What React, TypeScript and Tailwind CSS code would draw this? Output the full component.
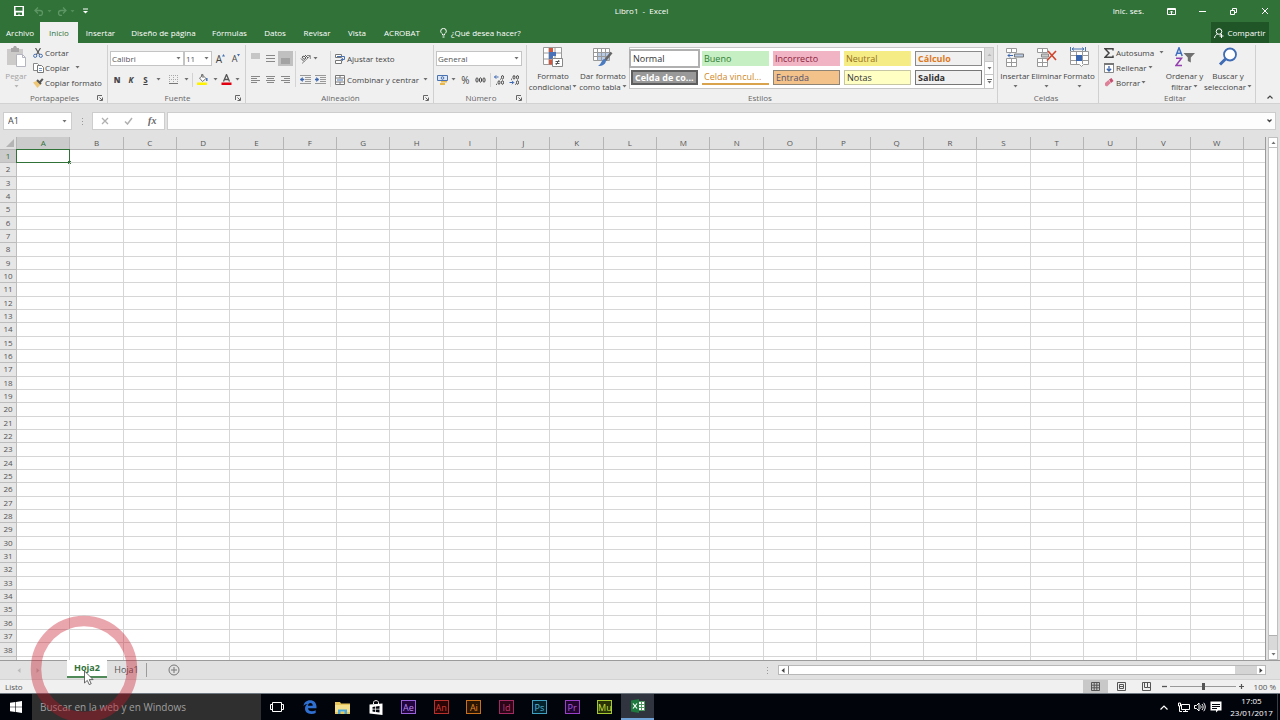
import React, { useState } from 'react';
import clsx from 'clsx';

const COLUMNS = 'ABCDEFGHIJKLMNOPQRSTUVW'.split('');
const ROWS = Array.from({ length: 38 }, (_, i) => i + 1);

const TABS = [
  { name: 'Archivo', width: 'w-10' },
  { name: 'Inicio', width: 'w-[38px]' },
  { name: 'Insertar', width: 'w-[45px]' },
  { name: 'Diseño de página', width: 'w-[81px]' },
  { name: 'Fórmulas', width: 'w-[51px]' },
  { name: 'Datos', width: 'w-10' },
  { name: 'Revisar', width: 'w-[44px]' },
  { name: 'Vista', width: 'w-9' },
  { name: 'ACROBAT', width: 'w-[54px]' },
];

const CELL_STYLES = [
  { name: 'Normal', look: 'bg-white text-[#333] outline-2 outline-[#b0b0b0]' },
  { name: 'Bueno', look: 'bg-[#c6efc4] text-[#2f7d32]' },
  { name: 'Incorrecto', look: 'bg-[#f0b4c4] text-[#8c1f3c]' },
  { name: 'Neutral', look: 'bg-[#f6ec86] text-[#94701c]' },
  { name: 'Cálculo', look: 'border border-[#8a8a8a] bg-[#f0f0f0] font-bold text-[#dd7a1e]' },
  { name: 'Celda de co...', look: 'border-2 border-[#5e5e5e] bg-[#999] font-bold text-white' },
  { name: 'Celda vincul...', look: 'border-b-2 border-[#d9a24c] bg-white text-[#d08a2a]' },
  { name: 'Entrada', look: 'border border-[#8f8577] bg-[#f2c28a] text-[#55526e]' },
  { name: 'Notas', look: 'border border-[#c6c6a4] bg-[#ffffc4] text-[#333]' },
  { name: 'Salida', look: 'border border-[#777] bg-[#f0f0f0] font-bold text-[#333]' },
];

const ADOBE_APPS = [
  { name: 'Ae', look: 'border-[#9a62d8] bg-[#22053f] text-[#b98af0]' },
  { name: 'An', look: 'border-[#b8302c] bg-[#2b0505] text-[#d13a33]' },
  { name: 'Ai', look: 'border-[#c8701c] bg-[#2a1503] text-[#e58a26]' },
  { name: 'Id', look: 'border-[#a32a60] bg-[#2b0518] text-[#c23a74]' },
  { name: 'Ps', look: 'border-[#3f9fc0] bg-[#04212e] text-[#55b8da]' },
  { name: 'Pr', look: 'border-[#9a3fc8] bg-[#22052f] text-[#b45ae0]' },
  { name: 'Mu', look: 'border-[#a8c832] bg-[#2a3305] text-[#c4e03c]' },
];

interface IconProps {
  w: number;
  h: number;
  className?: string;
  children: React.ReactNode;
}

const Icon: React.FC<IconProps> = ({ w, h, className, children }) => (
  <svg width={w} height={h} viewBox={`0 0 ${w} ${h}`} fill="none" stroke="currentColor" className={clsx('shrink-0', className)} aria-hidden="true">
    {children}
  </svg>
);

const Caret: React.FC<{ className?: string }> = ({ className }) => (
  <Icon w={5} h={3} className={clsx('inline-block opacity-75', className)}>
    <path d="M0.5 0h4L2.5 2.5z" fill="currentColor" stroke="none" />
  </Icon>
);

const Lines: React.FC<{ rows: [number, number, number][] }> = ({ rows }) => (
  <Icon w={11} h={9} className="text-[#888]">
    {rows.map(([x1, x2, y]) => (
      <path key={y} d={`M${x1} ${y}.5H${x2}`} />
    ))}
  </Icon>
);

interface ToolProps {
  label: string;
  width: string;
  className?: string;
  children: React.ReactNode;
}

const Tool: React.FC<ToolProps> = ({ label, width, className, children }) => (
  <button aria-label={label} title={label} className={clsx('flex h-[15px] shrink-0 items-center justify-center', width, className)}>
    {children}
  </button>
);

const Divider = () => <span className="h-[14px] w-px shrink-0 bg-[#d2d2d2]" />;

interface GroupProps {
  title: string;
  width: string;
  launcher?: boolean;
  children: React.ReactNode;
}

const Group: React.FC<GroupProps> = ({ title, width, launcher, children }) => (
  <section className={clsx('flex shrink-0 flex-col pt-[2px]', width)}>
    <div className="flex flex-1 flex-col border-r border-[#d0d0d0]">
      <div className="h-12">{children}</div>
      <div className="flex h-[10px] items-center pr-1 text-[#666]">
        <h2 className={clsx('flex-1 text-center leading-[10px]', launcher && 'pl-3')}>{title}</h2>
        {launcher && (
          <button aria-label={`Más opciones de ${title}`}>
            <Icon w={6} h={6}>
              <path d="M0.5 5V0.5H5M2.5 2.5L5 5M5.5 2.5v3h-3" />
            </Icon>
          </button>
        )}
      </div>
    </div>
  </section>
);

interface ComboProps {
  label: string;
  value: string;
  width: string;
}

const Combo: React.FC<ComboProps> = ({ label, value, width }) => (
  <div className={clsx('relative flex h-[15px] shrink-0 items-center border border-[#c4c4c4] bg-white', width)}>
    <select aria-label={label} className="w-full appearance-none bg-transparent pl-px leading-3 text-[#555] outline-none">
      <option>{value}</option>
    </select>
    <Caret className="pointer-events-none absolute right-[2px]" />
  </div>
);

interface BigButtonProps {
  lines: string[];
  width: string;
  icon: React.ReactNode;
  className?: string;
}

const BigButton: React.FC<BigButtonProps> = ({ lines, width, icon, className }) => (
  <button className={clsx('flex shrink-0 flex-col items-center whitespace-nowrap leading-[10px]', width, className)}>
    <span className="flex h-6 items-center">{icon}</span>
    <span className="mt-[2px]">{lines[0]}</span>
    <span className="flex h-[11px] items-center gap-px">
      {lines[1]}
      <Caret />
    </span>
  </button>
);

const ListButton: React.FC<{ icon: React.ReactNode; text: string; caret?: string }> = ({ icon, text, caret }) => (
  <button className="flex h-[15px] items-center whitespace-nowrap">
    <span className="flex w-3 shrink-0 justify-center">{icon}</span>
    <span className="pl-px">{text}</span>
    {caret && <Caret className={caret} />}
  </button>
);

const TitleBar = () => (
  <div className="flex h-[22px] items-center pr-[11px] pl-[14px] text-white">
    <div className="flex flex-1 items-center">
      <button aria-label="Guardar">
        <Icon w={10} h={10}>
          <path d="M0 0h10v10H0z" fill="currentColor" stroke="none" />
          <path d="M1.500 1h7v3.800h-7zM2 6.500h6V9H5.500V7.800h-1V9H2z" fill="#317239" stroke="none" />
        </Icon>
      </button>
      <button aria-label="Deshacer" className="ml-[10px] flex items-center gap-[3px] text-[#5d9763]">
        <Icon w={10} h={9}>
          <path d="M4 0.5L1 3.5l3 3M1 3.5h5a2.5 2.5 0 0 1 0 5H5" strokeWidth="1.3" />
        </Icon>
        <Caret />
      </button>
      <button aria-label="Rehacer" className="ml-[5px] flex items-center gap-[3px] text-[#5d9763]">
        <Icon w={10} h={9}>
          <path d="M6 0.5l3 3-3 3M9 3.5H4a2.5 2.5 0 0 0 0 5h1" strokeWidth="1.3" />
        </Icon>
        <Caret />
      </button>
      <button aria-label="Personalizar barra de acceso rápido" className="ml-2">
        <Icon w={5} h={6}>
          <path d="M0 1h5" />
          <path d="M0 3h5L2.5 5.5z" fill="currentColor" stroke="none" />
        </Icon>
      </button>
    </div>
    <h1>Libro1 &nbsp;-&nbsp; Excel</h1>
    <div className="flex flex-1 items-center justify-end">
      <button className="mr-[23px]">Inic. ses.</button>
      <button aria-label="Opciones de presentación de la cinta" className="mr-[23px]">
        <Icon w={9} h={7}>
          <path d="M0.5 0.5h8v6h-8zM0.5 1.5h8M4.5 6V3M3 4.5L4.5 3 6 4.5" />
        </Icon>
      </button>
      <button aria-label="Minimizar" className="mr-6">
        <Icon w={7} h={7}>
          <path d="M0 3.5h7" />
        </Icon>
      </button>
      <button aria-label="Restaurar" className="mr-6">
        <Icon w={7} h={7}>
          <path d="M0.5 2.5h4v4h-4zM2.5 2V0.5h4v4H5" />
        </Icon>
      </button>
      <button aria-label="Cerrar">
        <Icon w={8} h={8}>
          <path d="M1 1l6 6M7 1L1 7" />
        </Icon>
      </button>
    </div>
  </div>
);

const TabBar: React.FC<{ active: string; onSelect: (name: string) => void }> = ({ active, onSelect }) => (
  <nav className="flex h-[21px] items-stretch font-medium text-white">
    {TABS.map((tab) => (
      <button
        key={tab.name}
        onClick={() => onSelect(tab.name)}
        className={clsx('shrink-0 whitespace-nowrap', tab.width, active === tab.name && 'bg-[#f0f0f0] text-[#317239]')}
      >
        {tab.name}
      </button>
    ))}
    <button className="flex items-center gap-1 pl-[11px] font-normal whitespace-nowrap">
      <Icon w={7} h={10}>
        <path d="M2.5 7V6C1.5 5.2 0.7 4.3 0.7 3.2a2.8 2.8 0 0 1 5.6 0C6.3 4.3 5.5 5.2 4.5 6v1zM2.5 9h2" />
      </Icon>
      ¿Qué desea hacer?
    </button>
    <button className="mr-[11px] ml-auto flex w-[58px] items-center justify-center gap-[3px] bg-[#1f5527]">
      <Icon w={10} h={10}>
        <circle cx="5" cy="3.5" r="2.8" />
        <path d="M0.5 10C0.8 7.8 2 6.6 3.6 6.1M6.3 6.2l1 .8M7.5 6v4M5.5 8h4" />
      </Icon>
      Compartir
    </button>
  </nav>
);

const ClipboardGroup = () => (
  <Group title="Portapapeles" width="w-[108px]" launcher>
    <div className="flex">
      <BigButton
        lines={['Pegar', '']}
        width="w-8"
        className="text-[#a3a3a3]"
        icon={
          <Icon w={19} h={22}>
            <path d="M0 3h16v16H0z" fill="#cdcaca" stroke="none" />
            <path d="M4 2h2l1-2h2l1 2h2v4H4z" fill="#a9a7a7" stroke="none" />
            <path d="M9.500 8.500h6l3 3v9h-9z" fill="#fff" stroke="#b5b5c0" />
            <path d="M15.500 8.500v3h3" stroke="#b5b5c0" />
          </Icon>
        }
      />
      <div className="flex flex-col">
        <ListButton
          text="Cortar"
          icon={
            <Icon w={10} h={10}>
              <path d="M2.500 0L6.800 7M7.500 0L3.200 7" stroke="#555" strokeWidth="1.200" />
              <circle cx="2.200" cy="7.800" r="1.600" stroke="#4a72b0" />
              <circle cx="7.800" cy="7.800" r="1.600" stroke="#4a72b0" />
            </Icon>
          }
        />
        <ListButton
          text="Copiar"
          caret="ml-[6px]"
          icon={
            <Icon w={11} h={10}>
              <path d="M0.500 0.500h4l1 1v6h-5z" fill="#fff" stroke="#888" />
              <path d="M4.500 2.500h4l2 2v5h-6z" fill="#fff" stroke="#777" />
              <path d="M6 5.500h3M6 7.500h3" stroke="#7a98c4" />
            </Icon>
          }
        />
        <ListButton
          text="Copiar formato"
          icon={
            <Icon w={11} h={10}>
              <path d="M0 4.500L4.500 2.500 8 6 4.500 10z" fill="#eec877" stroke="none" />
              <path d="M4 2l4 4M7 4L9.800 0.800" stroke="#555" strokeWidth="2" />
            </Icon>
          }
        />
      </div>
    </div>
  </Group>
);

const FontGroup = () => (
  <Group title="Fuente" width="w-[138px]" launcher>
    <div className="flex flex-col gap-[6px] pt-[6px] pl-[2px]">
      <div className="flex items-center">
        <Combo label="Fuente" value="Calibri" width="w-[74px]" />
        <Combo label="Tamaño de fuente" value="11" width="w-[28px]" />
        <Tool label="Aumentar tamaño de fuente" width="w-[17px]">
          <span className="text-[10px] font-medium">A</span>
          <Icon w={3} h={9} className="text-[#4a72b0]">
            <path d="M0 2.500L1.500 0 3 2.500z" fill="currentColor" stroke="none" />
          </Icon>
        </Tool>
        <Tool label="Disminuir tamaño de fuente" width="w-[14px]">
          <span className="text-[9px] font-medium">A</span>
          <Icon w={3} h={9} className="text-[#4a72b0]">
            <path d="M0 0h3L1.500 2.500z" fill="currentColor" stroke="none" />
          </Icon>
        </Tool>
      </div>
      <div className="flex items-center">
        <Tool label="Negrita" width="w-[14px]" className="font-extrabold">N</Tool>
        <Tool label="Cursiva" width="w-[14px]" className="font-bold italic">K</Tool>
        <Tool label="Subrayado" width="w-[15px]" className="font-bold underline">S</Tool>
        <Tool label="Opciones de subrayado" width="w-[11px]"><Caret /></Tool>
        <Tool label="Bordes" width="w-[19px]">
          <Icon w={9} h={9} className="text-[#aaa]">
            <path d="M0.500 0v9M4.500 0v9M8.500 0v9M0 0.500h9M0 4.500h9" strokeDasharray="1 1" />
            <path d="M0 8.500h9" stroke="#777" />
          </Icon>
        </Tool>
        <Tool label="Opciones de bordes" width="w-[7px]"><Caret /></Tool>
        <span className="w-[2px]" />
        <Divider />
        <Tool label="Color de relleno" width="w-[19px]">
          <Icon w={11} h={11}>
            <path d="M2.500 4l3.500-2.500 3 3L5.500 7.500z" fill="#fff" stroke="#777" />
            <path d="M4.500 3V0.500h1.500V4" stroke="#777" />
            <path d="M9.800 4v3" stroke="#4a72b0" strokeWidth="1.500" />
            <path d="M0 8.500h10v2.500H0z" fill="#fff200" stroke="none" />
          </Icon>
        </Tool>
        <Tool label="Opciones de relleno" width="w-[7px]"><Caret /></Tool>
        <Tool label="Color de fuente" width="w-[15px]">
          <Icon w={11} h={11}>
            <path d="M2.500 7.500l3-7 3 7M3.500 5.500h4" stroke="#555" strokeWidth="1.300" />
            <path d="M0.500 8.500h10v2.500h-10z" fill="#e00010" stroke="none" />
          </Icon>
        </Tool>
        <Tool label="Opciones de color de fuente" width="w-[7px]"><Caret /></Tool>
      </div>
    </div>
  </Group>
);

const AlignmentGroup = () => (
  <Group title="Alineación" width="w-[188px]" launcher>
    <div className="flex pt-[6px] pl-[2px]">
      <div className="grid shrink-0 grid-cols-3 gap-y-[6px]">
        <Tool label="Alinear arriba" width="w-[15px]">
          <Icon w={11} h={11}><path d="M1 0h9v6H1z" fill="#c6c6c6" stroke="none" /></Icon>
        </Tool>
        <Tool label="Alinear en el medio" width="w-[15px]"><Lines rows={[[1, 10, 1], [1, 10, 4], [1, 10, 7]]} /></Tool>
        <Tool label="Alinear abajo" width="w-[15px]" className="bg-[#c0c0c0]">
          <Icon w={11} h={11}><path d="M1 5h9v6H1z" fill="#a2a2a2" stroke="none" /></Icon>
        </Tool>
        <Tool label="Alinear a la izquierda" width="w-[15px]"><Lines rows={[[1, 10, 1], [1, 7, 3], [1, 10, 5], [1, 7, 7]]} /></Tool>
        <Tool label="Centrar" width="w-[15px]"><Lines rows={[[1, 10, 1], [2, 9, 3], [1, 10, 5], [2, 9, 7]]} /></Tool>
        <Tool label="Alinear a la derecha" width="w-[15px]"><Lines rows={[[1, 10, 1], [4, 10, 3], [1, 10, 5], [4, 10, 7]]} /></Tool>
      </div>
      <div className="ml-[2px] flex w-9 shrink-0 flex-col gap-[6px] border-x border-[#d4d4d4] pl-[2px]">
        <div className="flex">
          <Tool label="Orientación" width="w-[14px]">
            <Icon w={11} h={10}>
              <path d="M2 9.500L10 2M7 1.500h3.300V5" stroke="#888" />
              <path d="M1 4.500l3 3M2 3l2-1 2 2-2 1.500zM5 1l3 3" stroke="#555" />
            </Icon>
          </Tool>
          <Tool label="Opciones de orientación" width="w-[7px]"><Caret /></Tool>
        </div>
        <div className="flex">
          <Tool label="Disminuir sangría" width="w-[15px]">
            <Icon w={11} h={9} className="text-[#999]">
              <path d="M0 0.500h11M5 2.500h6M5 4.500h6M5 6.500h6M0 8.500h11" />
              <path d="M0 4.500L2.500 2.500v1.500H4v1H2.500v1.500z" fill="#3a66b0" stroke="#3a66b0" strokeWidth="0.500" />
            </Icon>
          </Tool>
          <Tool label="Aumentar sangría" width="w-[15px]">
            <Icon w={11} h={9} className="text-[#999]">
              <path d="M0 0.500h11M5 2.500h6M5 4.500h6M5 6.500h6M0 8.500h11" />
              <path d="M4 4.500L1.500 2.500v1.500H0v1h1.500v1.500z" fill="#3a66b0" stroke="#3a66b0" strokeWidth="0.500" />
            </Icon>
          </Tool>
        </div>
      </div>
      <div className="flex flex-col gap-[6px] pl-[3px]">
        <ListButton
          text="Ajustar texto"
          icon={
            <Icon w={11} h={10}>
              <path d="M0.500 0.500h6v3h-6zM0.500 6.500h6v3h-6z" fill="#fff" stroke="#777" />
              <path d="M2 2.500h7.500v3H8" stroke="#4a72b0" />
              <path d="M5.500 5.500L8 3.800v3.400z" fill="#4a72b0" stroke="none" />
            </Icon>
          }
        />
        <ListButton
          text="Combinar y centrar"
          caret="ml-1"
          icon={
            <Icon w={10} h={10}>
              <path d="M0.500 0.500h9v9h-9zM0 3h10M0 7h10M5 0v3M5 7v3" fill="#fff" stroke="#777" />
              <path d="M2 5h6" stroke="#4a72b0" />
            </Icon>
          }
        />
      </div>
    </div>
  </Group>
);

const NumberGroup = () => (
  <Group title="Número" width="w-[93px]" launcher>
    <div className="flex flex-col gap-[6px] pt-[6px] pl-[2px]">
      <Combo label="Formato de número" value="General" width="w-[86px]" />
      <div className="flex items-center">
        <Tool label="Formato de contabilidad" width="w-[13px]">
          <Icon w={11} h={10}>
            <path d="M0.500 0.500h10v5h-10z" fill="#dde6f4" stroke="#4a72b0" />
            <circle cx="5.500" cy="3" r="1.300" stroke="#4a72b0" />
            <path d="M4 6h6v1.500H4zM3 8h5v2H3z" fill="#e8b848" stroke="none" />
          </Icon>
        </Tool>
        <Tool label="Opciones de contabilidad" width="w-[9px]"><Caret /></Tool>
        <Tool label="Estilo porcentual" width="w-[15px]" className="text-[10px]">%</Tool>
        <Tool label="Estilo millares" width="w-[15px]">
          <Icon w={11} h={6}>
            <ellipse cx="2" cy="3" rx="1.100" ry="2.200" />
            <ellipse cx="5.500" cy="3" rx="1.100" ry="2.200" />
            <ellipse cx="9" cy="3" rx="1.100" ry="2.200" />
          </Icon>
        </Tool>
        <span className="w-[2px]" />
        <Divider />
        <Tool label="Aumentar decimales" width="w-[16px]">
          <Icon w={11} h={10}>
            <path d="M4.500 2H0.500M2.200 0.300L0.500 2l1.700 1.700" stroke="#3a66b0" />
            <ellipse cx="8.500" cy="2.300" rx="1" ry="1.800" />
            <ellipse cx="5" cy="7.500" rx="1" ry="1.800" />
            <ellipse cx="8.500" cy="7.500" rx="1" ry="1.800" />
            <path d="M2 9.300h1M6 4.200h.8" />
          </Icon>
        </Tool>
        <Tool label="Disminuir decimales" width="w-[14px]">
          <Icon w={11} h={10}>
            <ellipse cx="5" cy="2.300" rx="1" ry="1.800" />
            <ellipse cx="8.500" cy="2.300" rx="1" ry="1.800" />
            <ellipse cx="8.500" cy="7.500" rx="1" ry="1.800" />
            <path d="M2 4.200h1M6 9.300h.8" />
            <path d="M0.500 7.500h4M3 5.800l1.700 1.700L3 9.200" stroke="#3a66b0" />
          </Icon>
        </Tool>
      </div>
    </div>
  </Group>
);

const StylesGroup = () => (
  <Group title="Estilos" width="w-[471px]">
    <div className="flex pl-px">
      <BigButton
        lines={['Formato', 'condicional']}
        width="w-[50px]"
        icon={
          <Icon w={20} h={20}>
            <path d="M0.500 0.500h18v17h-18zM0 6h18M0 12h18M6 0v17M12 0v17" fill="#fff" stroke="#9a9a9a" />
            <path d="M6 1h4v4H6zM6 12.500h5v5H6z" fill="#d0563f" stroke="none" />
            <path d="M6 5h7v4H6zM6 9h4v3H6z" fill="#4a72b8" stroke="none" />
            <path d="M9.500 11.500h10v8h-10z" fill="#fff" stroke="#888" />
            <path d="M12.500 14.500h4M12.500 16.500h4M16 13l-3 5" stroke="#555" />
          </Icon>
        }
      />
      <BigButton
        lines={['Dar formato', 'como tabla']}
        width="w-[50px]"
        icon={
          <Icon w={20} h={20}>
            <path d="M0.500 1.500h16v12h-16z" fill="#fff" stroke="#999" />
            <path d="M4 5h12v8H4z" fill="#b7cbe6" stroke="none" />
            <path d="M0 5.500h16M0 9.500h16M4.500 1v12M8.500 1v12M12.500 1v12" stroke="#999" />
            <path d="M18.500 5.500L12 13.500" stroke="#666" strokeWidth="2.500" />
            <path d="M13 13c0 4-3 6-8 6 3-1.500 3-5 6-7z" fill="#4a7ac0" stroke="none" />
          </Icon>
        }
      />
      <div className="mt-[2px] ml-px flex self-start border border-[#c6c6c6] bg-white">
        <div className="grid grid-cols-5 gap-1 py-[3px] pr-[2px] pl-px">
          {CELL_STYLES.map((style) => (
            <button key={style.name} className={clsx('h-[15px] w-[67px] px-[2px] text-left text-[9px] leading-[11px] whitespace-nowrap', style.look)}>
              {style.name}
            </button>
          ))}
        </div>
        <div className="flex w-[9px] flex-col divide-y divide-[#c6c6c6] border-l border-[#c6c6c6]">
          <button aria-label="Estilos anteriores" className="flex flex-1 items-center justify-center bg-[#dcdcdc] text-[#aaa]"><Caret className="rotate-180" /></button>
          <button aria-label="Estilos siguientes" className="flex flex-1 items-center justify-center"><Caret /></button>
          <button aria-label="Más estilos" className="flex flex-1 flex-col items-center justify-center gap-px">
            <span className="h-px w-[5px] bg-[#666]" />
            <Caret />
          </button>
        </div>
      </div>
    </div>
  </Group>
);

const CellsGroup = () => (
  <Group title="Celdas" width="w-[101px]">
    <div className="flex pl-px">
      <BigButton
        lines={['Insertar', '']}
        width="w-[32px]"
        icon={
          <Icon w={18} h={19} className="text-[#999]">
            <path d="M0.500 0.500h10v4h-10zM5.500 0.500v4M0.500 10.500h10v8h-10zM5.500 10.500v8M0.500 14.500h10" fill="#fff" />
            <path d="M8.500 6h9v3h-9z" fill="#b7cbe6" stroke="#777" />
            <path d="M7 7.500H2M4 5.500l-2 2 2 2" stroke="#3a66b0" />
          </Icon>
        }
      />
      <BigButton
        lines={['Eliminar', '']}
        width="w-[31px]"
        icon={
          <Icon w={20} h={19} className="text-[#999]">
            <path d="M0.500 0.500h10v4h-10zM5.500 0.500v4M0.500 10.500h10v8h-10zM5.500 10.500v8M0.500 14.500h10" fill="#fff" />
            <path d="M4.500 6h7v3h-7z" fill="#c9c9c9" stroke="#888" />
            <path d="M11 3l8 9M19 3l-9 9.500" stroke="#d0452c" strokeWidth="1.600" />
          </Icon>
        }
      />
      <BigButton
        lines={['Formato', '']}
        width="w-[34px]"
        icon={
          <Icon w={19} h={20}>
            <path d="M0.500 4.500h18v13h-5l-2 2-2-2h-9zM0 8.500h18M0 13.500h18M6.500 4v13M12.500 4v13" fill="#fff" stroke="#999" />
            <path d="M6 8h6v6H6z" fill="#3a66b0" stroke="none" />
            <path d="M0.500 0v4M15.500 0v4M2 2h12M4 0.500L2 2l2 1.500M12 0.500L14 2l-2 1.500" stroke="#4a72b0" />
          </Icon>
        }
      />
    </div>
  </Group>
);

const EditingGroup = () => (
  <Group title="Editar" width="w-[157px]">
    <div className="flex pl-1">
      <div className="flex w-[61px] shrink-0 flex-col">
        <ListButton
          text="Autosuma"
          caret="ml-[5px]"
          icon={
            <Icon w={10} h={10}>
              <path d="M9 2.500V0.800H1L5 5 1 9.200h8V7.500" stroke="#444" strokeWidth="1.500" />
            </Icon>
          }
        />
        <ListButton
          text="Rellenar"
          caret="ml-px"
          icon={
            <Icon w={10} h={10}>
              <path d="M0.500 0.500h9v9h-9z" fill="#fff" stroke="#888" />
              <path d="M0 1h10" stroke="#777" strokeWidth="2" />
              <path d="M5 3v5M2.800 5.800L5 8l2.200-2.200" stroke="#3a66b0" strokeWidth="1.300" />
            </Icon>
          }
        />
        <ListButton
          text="Borrar"
          caret="ml-px"
          icon={
            <Icon w={10} h={9}>
              <path d="M5 1.500L7.500 0 9.500 3 7 5z" fill="#c74e6e" stroke="none" />
              <path d="M4.500 2L6.800 5 3 8.500 1 7.500 1 5z" fill="#dd8098" stroke="none" />
            </Icon>
          }
        />
      </div>
      <BigButton
        lines={['Ordenar y', 'filtrar']}
        width="w-[41px]"
        icon={
          <Icon w={20} h={20}>
            <path d="M0.800 9L4 0.800 7.200 9M2 6.200h4" stroke="#3f6fc0" strokeWidth="1.500" />
            <path d="M1 11.300h5.500L1 18.500h6" stroke="#9440b0" strokeWidth="1.500" />
            <path d="M8.500 6h11.500l-4.200 4.500v5l-3-1.500v-3.500z" fill="#707070" stroke="none" />
          </Icon>
        }
      />
      <BigButton
        lines={['Buscar y', 'seleccionar']}
        width="w-[46px]"
        icon={
          <Icon w={20} h={20}>
            <circle cx="12" cy="7.500" r="6" fill="#fff" stroke="#3f6cb4" strokeWidth="1.800" />
            <path d="M7.500 12L2 17.500" stroke="#3f6cb4" strokeWidth="3" />
          </Icon>
        }
      />
    </div>
  </Group>
);

const FormulaBar = () => (
  <div className="flex h-[18px] items-stretch pr-1 pl-[3px]">
    <div className="relative flex w-[69px] items-center border border-[#cdcdcd] bg-white">
      <input aria-label="Cuadro de nombres" defaultValue="A1" className="w-full bg-transparent pl-1 text-[9px] text-[#444] outline-none" />
      <Caret className="absolute right-1" />
    </div>
    <div className="flex w-5 flex-col items-center justify-center gap-[2px]">
      <span className="size-px bg-[#999]" />
      <span className="size-px bg-[#999]" />
      <span className="size-px bg-[#999]" />
    </div>
    <div className="flex w-[73px] items-center justify-around border border-[#cdcdcd] bg-white text-[#b0b0b0]">
      <button aria-label="Cancelar">
        <Icon w={8} h={8}><path d="M1 1l6 6M7 1L1 7" strokeWidth="1.300" /></Icon>
      </button>
      <button aria-label="Introducir">
        <Icon w={9} h={8}><path d="M1 4.500L3.500 7 8 1" strokeWidth="1.500" /></Icon>
      </button>
      <button aria-label="Insertar función" className="font-['Liberation_Serif',serif] text-[10px] font-bold italic text-[#666]">fx</button>
    </div>
    <div className="ml-[2px] flex flex-1 items-center border border-[#cdcdcd] bg-[#fdfdfd] pr-[3px]">
      <input aria-label="Barra de fórmulas" className="h-full flex-1 bg-transparent px-1 text-[9px] outline-none" />
      <button aria-label="Expandir barra de fórmulas">
        <Icon w={5} h={4}><path d="M0.500 0.500l2 2 2-2" strokeWidth="1.300" /></Icon>
      </button>
    </div>
  </div>
);

const Sheet = () => (
  <table className="h-full w-full table-fixed border-separate border-spacing-0 border-r border-[#9b9b9b] bg-white text-center leading-3 text-[#555]">
    <colgroup>
      <col className="w-[17px]" />
      {COLUMNS.map((col) => <col key={col} />)}
      <col className="w-[21px]" />
    </colgroup>
    <thead>
      <tr className="h-[13px] bg-[#e1e1e1]">
        <td className="border-r border-b border-[#b5b5b5] p-0">
          <Icon w={9} h={9} className="ml-[6px]"><path d="M8 0v8H0z" fill="#b4b4b4" stroke="none" /></Icon>
        </td>
        {COLUMNS.map((col) => (
          <th
            key={col}
            scope="col"
            className={clsx('border-r border-b p-0 font-normal', col === 'A' ? 'border-r-[#b5b5b5] border-b-[#317239] bg-[#cbcbcb] text-[#317239]' : 'border-[#b5b5b5]')}
          >
            {col}
          </th>
        ))}
        <td className="border-b border-[#b5b5b5] p-0" />
      </tr>
    </thead>
    <tbody>
      {ROWS.map((row) => (
        <tr key={row}>
          <th
            scope="row"
            className={clsx('border-r border-b border-[#bdbdbd] p-0 font-normal', row === 1 ? 'bg-[#cbcbcb] text-[#317239]' : 'bg-[#e6e6e6]')}
          >
            {row}
          </th>
          {COLUMNS.map((col) => (
            <td key={col} className="relative border-r border-b border-[#d6d6d6] p-0">
              {row === 1 && col === 'A' && (
                <span className="absolute -top-px -right-px -bottom-px -left-px border border-[#317239]">
                  <span className="absolute -right-[2px] -bottom-[2px] size-[3px] bg-[#317239]" />
                </span>
              )}
            </td>
          ))}
          <td className="border-b border-[#d6d6d6] p-0" />
        </tr>
      ))}
      <tr className="h-[3px]">
        <td className="h-[3px] border-r border-[#bdbdbd] bg-[#e6e6e6] p-0" />
        {COLUMNS.map((col) => <td key={col} className="h-[3px] border-r border-[#d6d6d6] p-0" />)}
        <td className="h-[3px] p-0" />
      </tr>
    </tbody>
  </table>
);

const VerticalScrollbar = () => (
  <div className="mr-[2px] ml-[2px] flex w-[10px] shrink-0 flex-col border border-[#c0c0c0] bg-[#d9d9d9]">
    <button aria-label="Desplazar hacia arriba" className="flex h-[10px] items-center justify-center border-b border-[#c0c0c0] bg-white"><Caret className="rotate-180" /></button>
    <div className="flex-1 border-b border-[#b0b0b0] bg-white" />
    <div className="h-[14px]" />
    <button aria-label="Desplazar hacia abajo" className="flex h-[9px] items-center justify-center bg-white"><Caret /></button>
  </div>
);

const SheetTabs = () => (
  <div className="flex h-[19px] items-center border-t border-[#9b9b9b] text-[9px]">
    <button aria-label="Hoja anterior" className="ml-[17px] text-[#bbb]">
      <Icon w={4} h={5}><path d="M3.500 0v5L0.500 2.500z" fill="currentColor" stroke="none" /></Icon>
    </button>
    <button aria-label="Hoja siguiente" className="ml-[15px] text-[#bbb]">
      <Icon w={4} h={5}><path d="M0.500 0v5L3.500 2.500z" fill="currentColor" stroke="none" /></Icon>
    </button>
    <button className="-mt-px ml-[27px] flex h-[18px] w-10 items-center justify-center self-start border-b-2 border-[#4f8a58] bg-white font-bold text-[#317239]">Hoja2</button>
    <button className="flex h-[14px] w-10 items-center justify-center border-r border-[#9b9b9b] text-[#555]">Hoja1</button>
    <button aria-label="Hoja nueva" className="ml-[21px]">
      <Icon w={12} h={12} className="text-[#777]">
        <circle cx="6" cy="6" r="5" />
        <path d="M6 3v6M3 6h6" />
      </Icon>
    </button>
    <div className="mr-[14px] ml-auto flex h-[10px] w-[39%] items-stretch">
      <div className="mr-2 flex w-[3px] flex-col justify-center gap-[2px]">
        <span className="size-px bg-[#999]" />
        <span className="size-px bg-[#999]" />
        <span className="size-px bg-[#999]" />
      </div>
      <div className="flex flex-1 border border-[#b8b8b8] bg-[#d5d5d5]">
        <button aria-label="Desplazar a la izquierda" className="flex w-[10px] items-center justify-center border-r border-[#888] bg-white">
          <Icon w={4} h={5}><path d="M3.500 0v5L0.500 2.500z" fill="currentColor" stroke="none" /></Icon>
        </button>
        <div className="flex-1 bg-white" />
        <div className="w-[22px]" />
        <button aria-label="Desplazar a la derecha" className="flex w-2 items-center justify-center bg-white">
          <Icon w={4} h={5}><path d="M0.500 0v5L3.500 2.500z" fill="currentColor" stroke="none" /></Icon>
        </button>
      </div>
    </div>
  </div>
);

const StatusBar = () => {
  const [zoom, setZoom] = useState(100);

  return (
    <div className="flex h-[14px] items-center border-t border-[#d2d2d2] bg-[#f0f0f0] pr-1 pl-[5px] text-[#555]">
      <span className="flex-1">Listo</span>
      <button aria-label="Vista normal" className="flex h-full w-[25px] items-center justify-center bg-[#c8c8c8]">
        <Icon w={9} h={9}><path d="M0.500 0.500h8v8h-8zM3.200 0v9M5.800 0v9M0 3.200h9M0 5.800h9" /></Icon>
      </button>
      <button aria-label="Diseño de página" className="flex w-[26px] items-center justify-center">
        <Icon w={9} h={9}><path d="M0.500 0.500h8v8h-8zM2.500 2.500h4v4h-4zM3 4.500h3" /></Icon>
      </button>
      <button aria-label="Vista previa de salto de página" className="flex w-[25px] items-center justify-center">
        <Icon w={9} h={9}><path d="M0.500 0.500h8v8h-8zM2.500 0.500v5h3v-5M5.500 5.500h3" /></Icon>
      </button>
      <button aria-label="Alejar" onClick={() => setZoom(Math.max(10, zoom - 10))} className="ml-[3px]">
        <Icon w={5} h={5}><path d="M0 2.500h5" strokeWidth="1.300" /></Icon>
      </button>
      <input
        type="range"
        aria-label="Zoom"
        min={10}
        max={190}
        value={zoom}
        onChange={(e) => setZoom(Number(e.target.value))}
        className="mx-[3px] h-2 w-[66px] appearance-none bg-transparent [&::-webkit-slider-runnable-track]:h-px [&::-webkit-slider-runnable-track]:bg-[#999] [&::-webkit-slider-thumb]:-mt-[3px] [&::-webkit-slider-thumb]:h-[7px] [&::-webkit-slider-thumb]:w-[3px] [&::-webkit-slider-thumb]:appearance-none [&::-webkit-slider-thumb]:bg-[#555]"
      />
      <button aria-label="Acercar" onClick={() => setZoom(Math.min(190, zoom + 10))}>
        <Icon w={5} h={5}><path d="M0 2.500h5M2.500 0v5" strokeWidth="1.200" /></Icon>
      </button>
      <span className="w-8 text-right whitespace-nowrap">{zoom} %</span>
    </div>
  );
};

const Taskbar = () => (
  <footer className="flex h-[27px] items-stretch border-t border-[#6f7780] bg-[#02040b] text-white">
    <button aria-label="Inicio" className="flex w-8 items-center justify-center">
      <Icon w={12} h={12}>
        <path d="M0 1.700L5.400 1v4.700H0zM6 0.900L12 0v5.700H6zM0 6.300h5.400V11L0 10.300zM6 6.300h6V12l-6-.9z" fill="currentColor" stroke="none" />
      </Icon>
    </button>
    <input
      aria-label="Buscar en la web y en Windows"
      placeholder="Buscar en la web y en Windows"
      className="w-[229px] bg-[#2f2f2f] px-2 text-[10px] outline-none placeholder:text-[#9f9f9f]"
    />
    <div className="grid w-[393px] grid-cols-12">
      <button aria-label="Vista de tareas" className="flex items-center justify-center">
        <Icon w={14} h={10}><path d="M2.500 0.500h9v9h-9zM2 2.500H0.500v5H2M12 2.500h1.500v5H12" /></Icon>
      </button>
      <button aria-label="Microsoft Edge" className="flex items-center justify-center">
        <Icon w={14} h={14}>
          <path d="M0.500 6C1 2.500 3.500 0.300 7 0.300c4 0 6.500 2.700 6.500 6.500v1.400H5c.2 2 1.700 3 4 3 1.400 0 2.700-.4 3.700-1v2.700C11.500 13.600 10 14 8.300 14 4.400 14 2 12 2 8.600c0-2 1-3.600 2.700-4.500C3 4 1.500 4.800 0.500 6zM5 5.700h4.700C9.700 4 8.900 3.100 7.400 3.100 6 3.100 5.200 4.200 5 5.700z" fill="#2f6fd0" stroke="none" />
        </Icon>
      </button>
      <button aria-label="Explorador de archivos" className="flex items-center justify-center">
        <Icon w={15} h={13}>
          <path d="M0 1h5l1 1.500h9V13H0z" fill="#e9c65a" stroke="none" />
          <path d="M0 4h15v7H0z" fill="#f7e08c" stroke="none" />
          <path d="M3 13V8.500h9V13H9.500v-2.500h-4V13z" fill="#4aa7dc" stroke="none" />
        </Icon>
      </button>
      <button aria-label="Tienda" className="flex items-center justify-center">
        <Icon w={14} h={15}>
          <path d="M4.500 4V2.500c0-2.500 5-2.500 5 0V4" />
          <path d="M0.500 4.500L13.500 3.500V15L0.500 13.500z" fill="#fff" stroke="none" />
          <path d="M3.500 7l2.800-.4v2.200H3.500zM7 6.500l3.500-.5v2.800H7zM3.500 9.500h2.800v2.500l-2.800-.4zM7 9.500h3.500v3L7 12.100z" fill="#02040b" stroke="none" />
        </Icon>
      </button>
      {ADOBE_APPS.map((app) => (
        <button key={app.name} className="flex items-center justify-center">
          <span className={clsx('flex h-[14px] w-[15px] items-center justify-center border text-[9px] leading-none', app.look)}>{app.name}</span>
        </button>
      ))}
      <button aria-label="Excel" className="flex items-center justify-center border-b-2 border-[#6fa3d8] bg-[#30343e]">
        <Icon w={14} h={14}>
          <path d="M7.500 2.500h6v9h-6zM7.500 5.500h6M7.500 8.500h6M10.500 2.500v9" fill="#fff" stroke="#4f9a62" />
          <path d="M0 1.500L8 0v14l-8-1.500z" fill="#1f7a40" stroke="none" />
          <path d="M2 4.500l4 5M6 4.500l-4 5" stroke="#fff" strokeWidth="1.200" />
        </Icon>
      </button>
    </div>
    <div className="ml-auto flex items-center gap-1">
      <button aria-label="Mostrar iconos ocultos" className="mr-[2px] px-1">
        <Icon w={8} h={5}><path d="M0.500 4.500L4 1l3.500 3.500" strokeWidth="1.200" /></Icon>
      </button>
      <button aria-label="Red">
        <Icon w={12} h={11}>
          <path d="M3.500 2.500h8v5h-8zM5 9.500h5M7.500 8v1.500M0.500 1v3h2V1zM1.500 4v5.500H4" />
        </Icon>
      </button>
      <button aria-label="Volumen">
        <Icon w={12} h={10}>
          <path d="M0.500 3.500h2L5 1v8L2.500 6.500h-2zM6.500 3.500c.8 1 .8 2 0 3M8 2c1.500 2 1.500 4 0 6M9.700 0.800c2 2.600 2 5.800 0 8.400" />
        </Icon>
      </button>
      <button aria-label="Centro de actividades">
        <Icon w={12} h={12}>
          <path d="M0.500 0.500h11v9H8L6 11.500v-2H0.500z" fill="#fff" stroke="none" />
          <path d="M2 3.500h8M2 5.500h8M2 7.500h5" stroke="#02040b" />
        </Icon>
      </button>
      <time className="w-[51px] text-center leading-3">
        17:05
        <br />
        23/01/2017
      </time>
      <span className="mr-[2px] -ml-1 h-full w-px bg-[#3a3d44]" />
    </div>
  </footer>
);

// click highlight plus mouse pointer, drawn over the sheet tabs
const Pointer = () => (
  <div className="pointer-events-none absolute bottom-0 left-[30px] h-[105px] w-[108px] overflow-hidden">
    <Icon w={108} h={108}>
      <circle cx="54" cy="54" r="48" stroke="#c81428" strokeOpacity="0.380" strokeWidth="10.500" />
      <path d="M54.500 56v12l2.800-2.600 1.900 4.200 2-.9-1.900-4.100h3.800z" fill="#fff" stroke="#444" strokeWidth="0.800" />
    </Icon>
  </div>
);

export default function App() {
  const [tab, setTab] = useState('Inicio');

  return (
    <div className="relative flex h-screen flex-col overflow-hidden bg-[#e1e1e1] font-['Open_Sans','Noto_Sans',sans-serif] text-[8px] leading-3 text-[#444]">
      <header className="shrink-0 bg-[#317239]">
        <TitleBar />
        <TabBar active={tab} onSelect={setTab} />
      </header>
      <div className="flex h-[61px] shrink-0 border-b border-[#d2d2d2] bg-[#f0f0f0]">
        <ClipboardGroup />
        <FontGroup />
        <AlignmentGroup />
        <NumberGroup />
        <StylesGroup />
        <CellsGroup />
        <EditingGroup />
        <button aria-label="Contraer la cinta de opciones" className="mt-auto mr-[7px] mb-1 ml-auto">
          <Icon w={6} h={4}><path d="M0.500 3.500L3 1l2.500 2.500" strokeWidth="1.200" /></Icon>
        </button>
      </div>
      <div className="shrink-0 pt-2 pb-[7px]">
        <FormulaBar />
      </div>
      <main className="flex min-h-0 flex-1">
        <div className="min-w-0 flex-1">
          <Sheet />
        </div>
        <VerticalScrollbar />
      </main>
      <div className="shrink-0">
        <SheetTabs />
        <StatusBar />
        <Taskbar />
      </div>
      <Pointer />
    </div>
  );
}
